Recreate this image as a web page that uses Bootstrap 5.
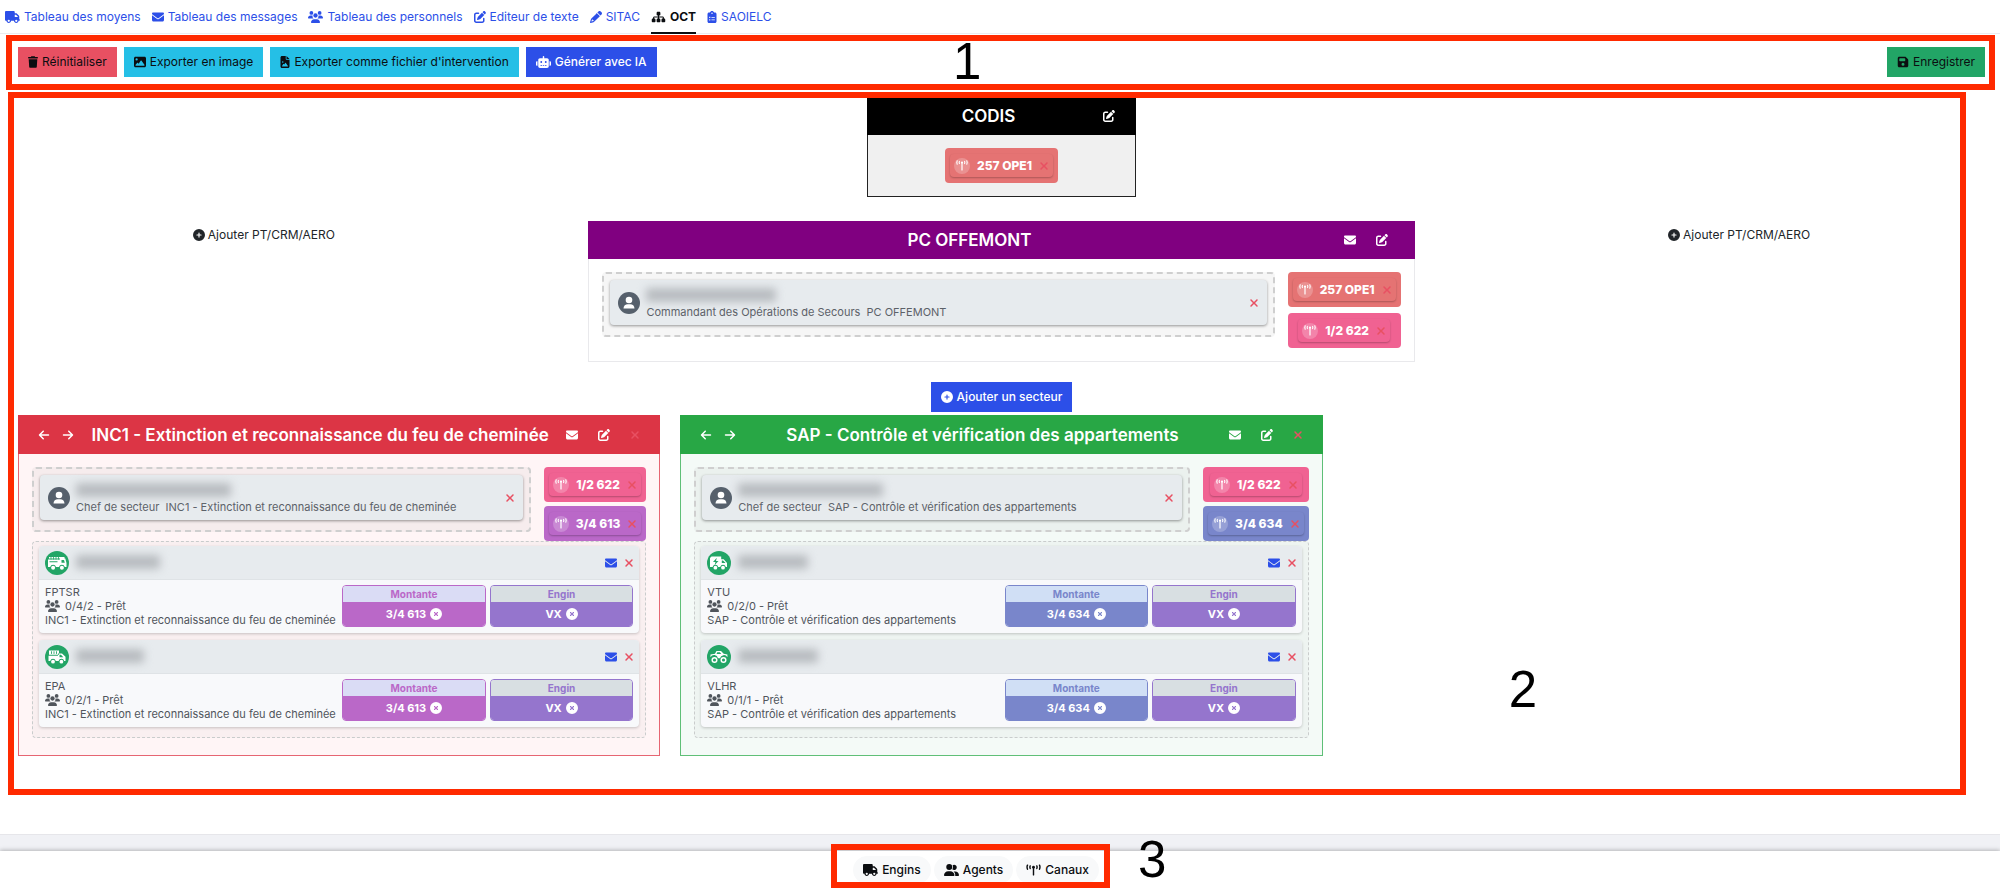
<!DOCTYPE html>
<html lang="fr">
<head>
<meta charset="utf-8">
<meta name="viewport" content="width=device-width, initial-scale=1">
<title>OCT</title>
<link rel="stylesheet" href="https://cdn.jsdelivr.net/npm/bootstrap@5.3.0/dist/css/bootstrap.min.css">
<style>
body { font-family: Inter, "Liberation Sans", sans-serif; font-size: 12px; line-height: 18px; color: #0b0d10; background: #fff; }
.ico { width: 12px; height: 12px; fill: currentColor; flex: none; }
.ico-wide { width: 15px; }
.ico-slim { width: 10px; }
.tabs-bar { height: 34px; padding-left: 5px; gap: 11px; border-bottom: 1px solid #ececf0; }
.tabs-bar a { display: flex; align-items: center; gap: 4px; height: 34px; color: #2c4fe8; text-decoration: none; padding-bottom: 1px; border-bottom: 2px solid transparent; padding-top: 2px; }
.tabs-bar a.active { color: #0b0d10; font-weight: 700; border-bottom-color: #0b0d10; }
.zone { border: 6px solid #ff2a00; }
.zone-num { position: absolute; font: 51px/52px "Liberation Sans", Arial, sans-serif; color: #000; }
.tool-zone { margin: 1px 5px 0 6px; padding: 6px 4px 7px 6px; gap: 7px; }
.num-one { left: 47.6%; top: -5px; }
.tool { --bs-btn-font-size: 12px; --bs-btn-line-height: 18px; --bs-btn-padding-y: 5px; --bs-btn-padding-x: 9px; --bs-btn-border-radius: 0; display: inline-flex; align-items: center; gap: 4px; }
.tool-red { --bs-btn-bg: #e85062; --bs-btn-border-color: #e85062; --bs-btn-color: #0b0d10; }
.tool-cyan { --bs-btn-bg: #25bfe6; --bs-btn-border-color: #25bfe6; --bs-btn-color: #0b0d10; }
.tool-blue { --bs-btn-bg: #2c4fe8; --bs-btn-border-color: #2c4fe8; --bs-btn-color: #fff; --bs-btn-font-weight: 500; }
.tool-green { --bs-btn-bg: #22a566; --bs-btn-border-color: #22a566; --bs-btn-color: #0b0d10; }
.board { padding: 7px 15px 0 18px; }
.board-zone { position: absolute; inset: 2px 34px 39px 8px; pointer-events: none; z-index: 2; }
.num-two { right: 423px; bottom: 73px; }
.glyph { border: 0; background: none; padding: 0; display: inline-flex; align-items: center; justify-content: center; color: inherit; }
.glyph-red { color: #e85062; }
.glyph-blue { color: #2c4fe8; }
.unit { border: 1px solid #e9e9ec; }
.unit-head { height: 38px; color: #fff; padding: 0 27px 0 14px; gap: 7px; margin: -1px -1px 0; }
.unit-title { font-size: 17px; line-height: 24px; font-weight: 600; margin: 0; flex: 1; text-align: center; white-space: nowrap; }
.head-tools { gap: 20px; flex: none; }
.codis { width: 269px; margin-bottom: 24px; background: #f0f0f0; border-color: #222; }
.codis .unit-head { background: #000; padding-right: 21px; }
.codis-body { padding: 13px 0; }
.command { width: 84%; }
.command .unit-head { background: #800080; }
.command-body { padding: 13px; gap: 13px; }
.add-link { font-size: 12px; line-height: 18px; color: #212529; gap: 3px; margin-top: 5px; }
.add-zone { margin: 20px 0 3px; }
.sectors { display: grid; grid-template-columns: repeat(3, minmax(0, 1fr)); gap: 20px; }
.sector-red { border-color: #e66572; background: #fff5f6; }
.sector-red .unit-head { background: #dc3545; }
.sector-green { border-color: #5fbf77; background: #f4faf7; }
.sector-green .unit-head { background: #28a745; }
.sectors .unit-head { height: 39px; padding: 0 20px; }
.moves { gap: 12px; }
.sector-body { padding: 13px 13px 17px; }
.lead-row { gap: 13px; }
.chips { display: flex; flex-direction: column; gap: 4px; flex: none; }
.command .chips { gap: 6px; }
.chip { border-radius: 4px; padding: 6px 5px; display: flex; justify-content: center; color: #fff; font-weight: 800; font-size: 12px; }
.chip-in { display: flex; align-items: center; height: 23px; padding: 0 4px; border-radius: 4px; box-shadow: 0 1px 2px rgba(0,0,0,.25); white-space: nowrap; }
.chip-in .aerial { width: 16px; height: 16px; margin-right: 7px; }
.chip-in .glyph { margin-left: 7px; }
.c-coral { background: #e57373; } .c-pink { background: #f06292; } .c-orchid { background: #ba68c8; } .c-indigo { background: #7986cb; }
.slot { flex: 1; min-width: 0; height: 65px; border: 2px dashed #cfcfcf; border-radius: 4px; background: rgba(0,0,0,.035); padding: 6px; }
.person { height: 45px; background: #e7ebee; border-radius: 4px; box-shadow: 0 1px 3px rgba(0,0,0,.4); padding: 0 7px 0 8px; gap: 6px; color: #5c6168; font-size: 11px; line-height: 14px; white-space: nowrap; }
.person .face { width: 22px; height: 22px; flex: none; }
.masked { display: block; height: 14px; margin: 2px 0 3px; border-radius: 3px; filter: blur(4px); background: #b8bcc0; }
.fleet { border: 1px dashed #c9cccc; border-radius: 4px; background: rgba(0,0,0,.025); padding: 4px 6px 10px; display: flex; flex-direction: column; gap: 7px; }
.engine { border-radius: 4px; background: #f8f9fb; box-shadow: 0 1px 3px rgba(0,0,0,.2); color: #50555c; font-size: 11px; line-height: 14px; overflow: hidden; }
.engine-head { height: 34px; background: #e7ebee; border-bottom: 1px solid #dfe3e6; padding: 0 5px 0 6px; gap: 7px; }
.engine-head .disc { width: 24px; height: 24px; flex: none; }
.engine-body { padding: 5px 6px 6px; gap: 4px; }
.engine-body p { margin: 0; white-space: nowrap; display: flex; align-items: center; gap: 5px; }
.line { width: 24.4%; flex: none; border-radius: 4px; overflow: hidden; border: 1px solid var(--tone); color: var(--tone); text-align: center; font-weight: 700; }
.line-kind { height: 16px; line-height: 16px; font-size: 10px; }
.line-name { height: 24px; line-height: 24px; background: var(--tone); color: #fff; gap: 4px; }
.t-orchid { --tone: #ba68c8; } .t-orchid .line-kind { background: #dadcf5; }
.t-indigo { --tone: #7986cb; } .t-indigo .line-kind { background: #d0dff5; }
.t-violet { --tone: #9575cd; } .t-violet .line-kind { background: #d8dfe2; }
.dock-gap { height: 17px; background: #f0f1f5; border-top: 1px solid #e6e6ea; }
.dock { height: 37px; padding: 5px 48px 0 0; gap: 3px; background: #fff; box-shadow: 0 -1px 4px rgba(0,0,0,.25); position: relative; }
.pill { --bs-btn-font-size: 12px; --bs-btn-line-height: 18px; --bs-btn-padding-y: 4px; --bs-btn-padding-x: 9px; --bs-btn-font-weight: 500; --bs-btn-color: #0b0d10; --bs-btn-bg: #f8f9fa; --bs-btn-border-color: #f8f9fa; display: inline-flex; align-items: center; gap: 4px; }
.dock-zone { position: absolute; top: -7px; bottom: 0; left: calc(50% - 169px); width: 279px; pointer-events: none; }
.num-three { left: calc(50% + 138px); top: -17px; }
</style>
</head>
<body class="d-flex flex-column min-vh-100">
<svg class="d-none" xmlns="http://www.w3.org/2000/svg">
<symbol id="truck" viewBox="0 0 640 512"><path fill-rule="evenodd" d="M48 0C21.500 0 0 21.500 0 48V368c0 26.500 21.500 48 48 48H64c0 53 43 96 96 96s96-43 96-96H384c0 53 43 96 96 96s96-43 96-96h32c17.700 0 32-14.300 32-32s-14.300-32-32-32V237.300c0-17-6.700-33.300-18.700-45.300L512 114.700c-12-12-28.300-18.700-45.300-18.700H416V48c0-26.500-21.500-48-48-48H48zM416 160h50.700L544 237.300V256H416V160zM112 416a48 48 0 1 1 96 0 48 48 0 1 1-96 0zm368-48a48 48 0 1 1 0 96 48 48 0 1 1 0-96z"/></symbol>
<symbol id="mail" viewBox="0 0 512 512"><path d="M48 64C21.500 64 0 85.500 0 112c0 15.100 7.100 29.300 19.200 38.400L236.800 313.600c11.400 8.500 27 8.500 38.400 0L492.800 150.400c12.100-9.100 19.200-23.300 19.200-38.400c0-26.500-21.500-48-48-48H48zM0 176V384c0 35.300 28.700 64 64 64H448c35.300 0 64-28.700 64-64V176L294.400 339.200c-22.800 17.100-54 17.100-76.800 0L0 176z"/></symbol>
<symbol id="edit" viewBox="0 0 512 512"><path d="M471.600 21.700c-21.900-21.900-57.300-21.900-79.200 0L362.300 51.700l97.900 97.900 30.100-30.100c21.900-21.900 21.900-57.300 0-79.200L471.600 21.700zm-299.200 220c-6.100 6.100-10.800 13.600-13.500 21.900l-29.600 88.800c-2.900 8.600-.6 18.100 5.800 24.600s15.900 8.700 24.600 5.800l88.800-29.600c8.200-2.700 15.700-7.400 21.900-13.500L437.700 172.300 339.700 74.300 172.400 241.700zM96 64C43 64 0 107 0 160V416c0 53 43 96 96 96H352c53 0 96-43 96-96V320c0-17.700-14.300-32-32-32s-32 14.300-32 32v96c0 17.700-14.300 32-32 32H96c-17.700 0-32-14.300-32-32V160c0-17.700 14.300-32 32-32h96c17.700 0 32-14.300 32-32s-14.300-32-32-32H96z"/></symbol>
<symbol id="pencil" viewBox="0 0 512 512"><path fill-rule="evenodd" d="M410.300 231l11.300-11.300-33.900-33.900-62.100-62.100L291.700 89.800l-11.300 11.300-22.600 22.600L58.600 322.900c-10.400 10.400-18 23.300-22.200 37.400L1 480.700c-2.500 8.400-.2 17.500 6.100 23.700s15.300 8.500 23.700 6.100l120.300-35.400c14.100-4.200 27-11.800 37.400-22.200L387.700 253.700 410.300 231zM160 399.400l-9.100 22.700c-4 3.100-8.500 5.400-13.300 6.900L59.400 452l23-78.100c1.400-4.900 3.800-9.400 6.900-13.300l22.700-9.100v32c0 8.800 7.200 16 16 16h32zM362.700 18.700L314.300 67.100l130 130 48.400-48.400c25-25 25-65.500 0-90.500L453.300 18.700c-25-25-65.500-25-90.500 0z"/></symbol>
<symbol id="tree" viewBox="0 0 576 512"><path d="M208 80c0-26.500 21.500-48 48-48h64c26.500 0 48 21.500 48 48v64c0 26.500-21.500 48-48 48h-8v40H464c30.900 0 56 25.100 56 56v32h8c26.500 0 48 21.500 48 48v64c0 26.500-21.500 48-48 48H464c-26.500 0-48-21.500-48-48V368c0-26.500 21.500-48 48-48h8V288c0-4.400-3.600-8-8-8H312v40h8c26.500 0 48 21.500 48 48v64c0 26.500-21.500 48-48 48H256c-26.500 0-48-21.500-48-48V368c0-26.500 21.500-48 48-48h8V280H112c-4.400 0-8 3.600-8 8v32h8c26.500 0 48 21.500 48 48v64c0 26.500-21.500 48-48 48H48c-26.500 0-48-21.500-48-48V368c0-26.500 21.500-48 48-48h8V288c0-30.900 25.100-56 56-56H264V192h-8c-26.500 0-48-21.500-48-48V80z"/></symbol>
<symbol id="clip" viewBox="0 0 384 512"><path fill-rule="evenodd" d="M192 0c-42 0-77 27-90 64H64C29 64 0 93 0 128V448c0 35 29 64 64 64H320c35 0 64-29 64-64V128c0-35-29-64-64-64H282C269 27 234 0 192 0zm0 64a32 32 0 1 1 0 64 32 32 0 1 1 0-64zM72 248h48v48H72zm96 8h144v32H168zM72 352h48v48H72zm96 8h144v32H168z"/></symbol>
<symbol id="crew" viewBox="0 0 640 512"><circle cx="144" cy="80" r="80"/><circle cx="496" cy="80" r="80"/><circle cx="320" cy="192" r="92"/><path d="M0 299C0 240 48 192 107 192h42c18 0 34 4 49 10-14 56 8 90 42 118H21c-12 0-21-9-21-21zM640 299c0-59-48-107-107-107h-42c-18 0-34 4-49 10 14 56-8 90-42 118H619c12 0 21-9 21-21zM128 485c0-74 60-133 133-133H379c74 0 133 60 133 133 0 15-12 27-27 27H155c-15 0-27-12-27-27z"/></symbol>
<symbol id="duo" viewBox="0 0 640 512"><path d="M96 128a128 128 0 1 1 256 0A128 128 0 1 1 96 128zM0 482.300C0 383.800 79.800 304 178.300 304h91.400C368.200 304 448 383.800 448 482.300c0 16.400-13.300 29.700-29.700 29.700H29.700C13.300 512 0 498.700 0 482.300zM609.300 512H471.400c5.400-9.400 8.600-20.300 8.600-32v-8c0-60.700-27.100-115.200-69.800-151.800c2.400-.1 4.700-.2 7.100-.2h61.400C567.800 320 640 392.200 640 481.300c0 17-13.800 30.700-30.700 30.700zM432 256c-31 0-59-12.600-79.300-32.900C372.400 196.500 384 163.600 384 128c0-26.800-6.600-52.100-18.300-74.300C384.300 40.100 407.200 32 432 32c61.900 0 112 50.100 112 112s-50.100 112-112 112z"/></symbol>
<symbol id="trash" viewBox="0 0 448 512"><path d="M135.200 17.700L128 32H32C14.300 32 0 46.300 0 64S14.300 96 32 96H416c17.700 0 32-14.300 32-32s-14.300-32-32-32H320l-7.200-14.300C307.400 6.800 296.300 0 284.200 0H163.800c-12.100 0-23.200 6.800-28.600 17.700zM416 128H32L53.200 467c1.600 25.300 22.600 45 47.900 45H346.900c25.300 0 46.300-19.700 47.900-45L416 128z"/></symbol>
<symbol id="image" viewBox="0 0 512 512"><path fill-rule="evenodd" d="M0 96C0 60.700 28.700 32 64 32H448c35.300 0 64 28.700 64 64V416c0 35.300-28.700 64-64 64H64c-35.300 0-64-28.700-64-64V96zM323.800 202.500c-4.500-6.600-11.900-10.500-19.800-10.500s-15.400 3.900-19.800 10.500l-87 127.600L170.700 297c-4.600-5.700-11.500-9-18.700-9s-14.200 3.300-18.700 9l-64 80c-5.800 7.200-6.900 17.100-2.900 25.400s12.400 13.600 21.600 13.600H424c8.900 0 17.100-4.900 21.200-12.800s3.600-17.400-1.400-24.700l-120-176zM112 192a48 48 0 1 0 0-96 48 48 0 1 0 0 96z"/></symbol>
<symbol id="fileimg" viewBox="0 0 384 512"><path fill-rule="evenodd" d="M64 0C28.700 0 0 28.700 0 64V448c0 35.300 28.700 64 64 64H320c35.300 0 64-28.700 64-64V160H256c-17.700 0-32-14.300-32-32V0H64zM256 0V128H384L256 0zM64 256a32 32 0 1 1 64 0 32 32 0 1 1-64 0zm152 32c5.300 0 10.200 2.600 13.200 6.900l88 128c3.400 4.900 3.700 11.300 1 16.500s-8.200 8.600-14.200 8.600H80c-5.800 0-11.100-3.100-13.900-8.100s-2.800-11.200.2-16.100l48-80c2.900-4.800 8.100-7.800 13.700-7.800s10.800 2.900 13.700 7.800l12.800 21.400 48.300-70.200c3-4.300 7.900-6.900 13.200-6.900z"/></symbol>
<symbol id="robot" viewBox="0 0 640 512"><path fill-rule="evenodd" d="M320 0c17.700 0 32 14.300 32 32V96H472c39.800 0 72 32.200 72 72V440c0 39.800-32.200 72-72 72H168c-39.800 0-72-32.200-72-72V168c0-39.800 32.200-72 72-72H288V32c0-17.700 14.300-32 32-32zM192 384v32h64v-32zm96 0v32h64v-32zm96 0v32h64v-32zM264 256a40 40 0 1 0-80 0 40 40 0 1 0 80 0zm152 40a40 40 0 1 0 0-80 40 40 0 1 0 0 80zM48 224H64V416H48c-26.500 0-48-21.500-48-48V272c0-26.500 21.500-48 48-48zm544 0c26.500 0 48 21.500 48 48v96c0 26.500-21.500 48-48 48H576V224h16z"/></symbol>
<symbol id="save" viewBox="0 0 448 512"><path fill-rule="evenodd" d="M64 32C28.700 32 0 60.700 0 96V416c0 35.300 28.700 64 64 64H384c35.300 0 64-28.700 64-64V173.300c0-17-6.700-33.300-18.700-45.300L352 50.700C340 38.700 323.700 32 306.700 32H64zm0 96c0-17.700 14.300-32 32-32H288c17.700 0 32 14.300 32 32v64c0 17.700-14.300 32-32 32H96c-17.700 0-32-14.300-32-32V128zM224 288a64 64 0 1 1 0 128 64 64 0 1 1 0-128z"/></symbol>
<symbol id="plus" viewBox="0 0 512 512"><path fill-rule="evenodd" d="M256 512A256 256 0 1 0 256 0a256 256 0 1 0 0 512zM232 344V280H168c-13.300 0-24-10.700-24-24s10.700-24 24-24h64V168c0-13.300 10.700-24 24-24s24 10.700 24 24v64h64c13.300 0 24 10.700 24 24s-10.700 24-24 24H280v64c0 13.300-10.700 24-24 24s-24-10.700-24-24z"/></symbol>
<symbol id="cross" viewBox="0 0 384 512"><path d="M342.600 150.600c12.500-12.500 12.500-32.800 0-45.300s-32.800-12.500-45.300 0L192 210.700 86.600 105.400c-12.500-12.500-32.800-12.500-45.300 0s-12.500 32.800 0 45.300L146.700 256 41.400 361.400c-12.500 12.500-12.500 32.800 0 45.300s32.800 12.500 45.300 0L192 301.300 297.400 406.600c12.500 12.500 32.800 12.500 45.300 0s12.500-32.800 0-45.300L237.300 256 342.600 150.600z"/></symbol>
<symbol id="drop" viewBox="0 0 512 512"><path fill-rule="evenodd" d="M256 512A256 256 0 1 0 256 0a256 256 0 1 0 0 512zM175 175c9.400-9.400 24.600-9.400 33.900 0l47 47 47-47c9.400-9.400 24.600-9.400 33.900 0s9.400 24.600 0 33.900l-47 47 47 47c9.400 9.400 9.400 24.600 0 33.900s-24.600 9.400-33.900 0l-47-47-47 47c-9.400 9.400-24.600 9.400-33.900 0s-9.400-24.600 0-33.900l47-47-47-47c-9.400-9.400-9.400-24.600 0-33.900z"/></symbol>
<symbol id="left" viewBox="0 0 448 512"><path d="M9.400 233.400c-12.500 12.500-12.500 32.800 0 45.300l160 160c12.500 12.500 32.800 12.500 45.300 0s12.500-32.800 0-45.300L109.200 288H416c17.700 0 32-14.300 32-32s-14.300-32-32-32H109.300L214.600 118.600c12.500-12.500 12.500-32.800 0-45.300s-32.800-12.500-45.300 0l-160 160z"/></symbol>
<symbol id="right" viewBox="0 0 448 512"><path d="M438.600 233.400c12.500 12.500 12.500 32.800 0 45.300l-160 160c-12.500 12.500-32.800 12.500-45.300 0s-12.500-32.800 0-45.300L338.800 288H32c-17.700 0-32-14.300-32-32s14.300-32 32-32H338.700L233.400 118.600c-12.500-12.500-12.500-32.800 0-45.300s32.800-12.500 45.300 0l160 160z"/></symbol>
<symbol id="tower" viewBox="0 0 20 16"><g fill="none" stroke="currentColor" stroke-linecap="round"><path stroke-width="1.900" d="M10 5v9.500"/><path stroke-width="1.900" d="M2 1.500q-1.200 2.500 0 5.500M5.600 2.500q-.8 1.500 0 3.500M18 1.500q1.200 2.500 0 5.500M14.400 2.500q.8 1.500 0 3.500"/></g><circle cx="10" cy="4.300" r="1.900"/></symbol>
<symbol id="aerial" viewBox="0 0 16 16"><circle cx="8" cy="8" r="8" fill="#fff" fill-opacity=".22"/><g fill="none" stroke="#fff" stroke-linecap="round"><path stroke-width="1.200" d="M8 5v7"/><path stroke-width="1.100" d="M3.200 2.800q-.8 1.600 0 3.400M5.400 3.400q-.5 1 0 2.200M12.800 2.800q.8 1.600 0 3.400M10.600 3.400q.5 1 0 2.200"/></g><circle cx="8" cy="4.600" r="1.100" fill="#fff"/></symbol>
<symbol id="face" viewBox="0 0 22 22"><circle cx="11" cy="11" r="11" fill="#56606c"/><circle cx="11" cy="8" r="3.300" fill="#fff"/><path fill="#fff" d="M5.500 16.500c0-2.800 2-4.300 4.200-4.300h2.600c2.200 0 4.200 1.500 4.200 4.300z"/></symbol>
<symbol id="v-pump" viewBox="0 0 24 24"><circle cx="12" cy="12" r="12" fill="#22a566"/><path fill="#fff" fill-rule="evenodd" d="M4 6h15.500v1.400H4zM3 8.600h12V7.500h5.300l1.200 4.500v4h-1.700a3 3 0 0 0-5.800 0H11a3 3 0 0 0-5.800 0H3zM16.500 9v2.800h3.300L19 9zM4.500 10.300v1h8v-1z"/><circle cx="8.100" cy="16.700" r="2" fill="#fff"/><circle cx="16.900" cy="16.700" r="2" fill="#fff"/><path stroke="#22a566" stroke-width=".8" d="M6 6v2.500M8.500 6v2.500M11 6v2.500M13.500 6v2.500"/></symbol>
<symbol id="v-ladder" viewBox="0 0 24 24"><circle cx="12" cy="12" r="12" fill="#22a566"/><path fill="#fff" fill-rule="evenodd" d="M4 5.500h10v4.200H4zM3.500 10.700h9.500V8.500h4l3.500 3.300V16h-1.300a2.900 2.900 0 0 0-5.600 0h-2.800a2.900 2.900 0 0 0-5.600 0H3.500zM14.500 9.700v2.600h3.800l-2.300-2.600z"/><circle cx="8" cy="16.700" r="1.900" fill="#fff"/><circle cx="16.400" cy="16.700" r="1.900" fill="#fff"/><path stroke="#22a566" stroke-width=".9" d="M6.500 6.300v2.600M9 6.300v2.600M11.500 6.300v2.600"/></symbol>
<symbol id="v-van" viewBox="0 0 24 24"><circle cx="12" cy="12" r="12" fill="#22a566"/><path fill="#fff" fill-rule="evenodd" d="M4.500 5.500h9.700v2.700h2.500l3.300 3.800v4h-1.200a2.900 2.900 0 0 0-5.600 0h-2a2.900 2.900 0 0 0-5.600 0H3V7zM9.800 6.700L6 11h2.500l-1 3.200 4-4.300H9zM14.800 9.400v2.700h3.800L16 9.400z"/><circle cx="8.400" cy="16.700" r="1.900" fill="#fff"/><circle cx="16" cy="16.700" r="1.900" fill="#fff"/></symbol>
<symbol id="v-off" viewBox="0 0 24 24"><circle cx="12" cy="12" r="12" fill="#22a566"/><path fill="#fff" fill-rule="evenodd" d="M3.500 12.200V9.600L8 8.800l1.500-2.900H14l2.700 2.900 3.700.8v2.600a4 4 0 0 0-7.400 1h-2a4 4 0 0 0-7.500-1zM10.300 7.200L9.500 9h4.800l-1.500-1.800z"/><g fill="none" stroke="#fff" stroke-width="1.500"><circle cx="7.500" cy="15" r="2.300"/><circle cx="16.500" cy="15" r="2.300"/></g></symbol>
</svg>

<nav class="tabs-bar d-flex">
  <a href="#"><svg class="ico ico-wide"><use href="#truck"/></svg>Tableau des moyens</a>
  <a href="#"><svg class="ico"><use href="#mail"/></svg>Tableau des messages</a>
  <a href="#"><svg class="ico ico-wide"><use href="#crew"/></svg>Tableau des personnels</a>
  <a href="#"><svg class="ico"><use href="#edit"/></svg>Editeur de texte</a>
  <a href="#"><svg class="ico"><use href="#pencil"/></svg>SITAC</a>
  <a href="#" class="active" aria-current="page"><svg class="ico ico-wide"><use href="#tree"/></svg>OCT</a>
  <a href="#"><svg class="ico ico-slim"><use href="#clip"/></svg>SAOIELC</a>
</nav>

<section class="tool-zone zone d-flex position-relative">
  <button type="button" class="btn tool tool-red"><svg class="ico ico-slim"><use href="#trash"/></svg>Réinitialiser</button>
  <button type="button" class="btn tool tool-cyan"><svg class="ico"><use href="#image"/></svg>Exporter en image</button>
  <button type="button" class="btn tool tool-cyan"><svg class="ico ico-slim"><use href="#fileimg"/></svg>Exporter comme fichier d'intervention</button>
  <button type="button" class="btn tool tool-blue"><svg class="ico ico-wide"><use href="#robot"/></svg>Générer avec IA</button>
  <span class="zone-num num-one">1</span>
  <button type="button" class="btn tool tool-green ms-auto"><svg class="ico"><use href="#save"/></svg>Enregistrer</button>
</section>

<main class="board position-relative flex-grow-1">
  <section class="unit codis mx-auto">
    <header class="unit-head d-flex align-items-center"><h2 class="unit-title">CODIS</h2>
      <div class="head-tools d-flex"><button type="button" class="glyph" aria-label="Modifier"><svg class="ico"><use href="#edit"/></svg></button></div></header>
    <div class="codis-body d-flex justify-content-center">
      <div class="chip c-coral"><div class="chip-in"><svg class="aerial"><use href="#aerial"/></svg>257 OPE1<button type="button" class="glyph glyph-red" aria-label="Retirer"><svg class="ico ico-slim"><use href="#cross"/></svg></button></div></div>
    </div>
  </section>

  <div class="row g-0">
    <div class="col-3 d-flex justify-content-center align-items-start"><button type="button" class="glyph add-link"><svg class="ico"><use href="#plus"/></svg>Ajouter PT/CRM/AERO</button></div>
    <div class="col-6">
      <section class="unit command mx-auto">
        <header class="unit-head d-flex align-items-center"><h2 class="unit-title">PC OFFEMONT</h2>
          <div class="head-tools d-flex"><button type="button" class="glyph" aria-label="Message"><svg class="ico"><use href="#mail"/></svg></button><button type="button" class="glyph" aria-label="Modifier"><svg class="ico"><use href="#edit"/></svg></button></div></header>
        <div class="command-body d-flex">
          <div class="slot"><div class="person d-flex align-items-center"><svg class="face"><use href="#face"/></svg><div class="flex-grow-1"><span class="masked" style="width:130px"></span>Commandant des Opérations de Secours&nbsp; PC OFFEMONT</div><button type="button" class="glyph glyph-red" aria-label="Retirer"><svg class="ico"><use href="#cross"/></svg></button></div></div>
          <div class="chips">
            <div class="chip c-coral"><div class="chip-in"><svg class="aerial"><use href="#aerial"/></svg>257 OPE1<button type="button" class="glyph glyph-red" aria-label="Retirer"><svg class="ico ico-slim"><use href="#cross"/></svg></button></div></div>
            <div class="chip c-pink"><div class="chip-in"><svg class="aerial"><use href="#aerial"/></svg>1/2 622<button type="button" class="glyph glyph-red" aria-label="Retirer"><svg class="ico ico-slim"><use href="#cross"/></svg></button></div></div>
          </div>
        </div>
      </section>
    </div>
    <div class="col-3 d-flex justify-content-center align-items-start"><button type="button" class="glyph add-link"><svg class="ico"><use href="#plus"/></svg>Ajouter PT/CRM/AERO</button></div>
  </div>

  <div class="add-zone d-flex justify-content-center"><button type="button" class="btn tool tool-blue"><svg class="ico"><use href="#plus"/></svg>Ajouter un secteur</button></div>

  <div class="sectors">
    <section class="unit sector-red">
      <header class="unit-head d-flex align-items-center">
        <div class="moves d-flex"><button type="button" class="glyph" aria-label="Vers la gauche"><svg class="ico"><use href="#left"/></svg></button><button type="button" class="glyph" aria-label="Vers la droite"><svg class="ico"><use href="#right"/></svg></button></div>
        <h2 class="unit-title">INC1 - Extinction et reconnaissance du feu de cheminée</h2>
        <div class="head-tools d-flex"><button type="button" class="glyph" aria-label="Message"><svg class="ico"><use href="#mail"/></svg></button><button type="button" class="glyph" aria-label="Modifier"><svg class="ico"><use href="#edit"/></svg></button><button type="button" class="glyph glyph-red" aria-label="Supprimer"><svg class="ico ico-slim"><use href="#cross"/></svg></button></div>
      </header>
      <div class="sector-body">
        <div class="d-flex lead-row">
          <div class="slot"><div class="person d-flex align-items-center"><svg class="face"><use href="#face"/></svg><div class="flex-grow-1"><span class="masked" style="width:155px"></span>Chef de secteur&nbsp; INC1 - Extinction et reconnaissance du feu de cheminée</div><button type="button" class="glyph glyph-red" aria-label="Retirer"><svg class="ico"><use href="#cross"/></svg></button></div></div>
          <div class="chips">
            <div class="chip c-pink"><div class="chip-in"><svg class="aerial"><use href="#aerial"/></svg>1/2 622<button type="button" class="glyph glyph-red" aria-label="Retirer"><svg class="ico ico-slim"><use href="#cross"/></svg></button></div></div>
            <div class="chip c-orchid"><div class="chip-in"><svg class="aerial"><use href="#aerial"/></svg>3/4 613<button type="button" class="glyph glyph-red" aria-label="Retirer"><svg class="ico ico-slim"><use href="#cross"/></svg></button></div></div>
          </div>
        </div>
        <div class="fleet">
          <article class="engine">
            <div class="engine-head d-flex align-items-center"><svg class="disc"><use href="#v-pump"/></svg><span class="masked" style="width:84px"></span><button type="button" class="glyph glyph-blue ms-auto" aria-label="Message"><svg class="ico"><use href="#mail"/></svg></button><button type="button" class="glyph glyph-red" aria-label="Retirer"><svg class="ico ico-slim"><use href="#cross"/></svg></button></div>
            <div class="engine-body d-flex">
              <div class="flex-grow-1"><p>FPTSR</p><p><svg class="ico ico-wide"><use href="#crew"/></svg>0/4/2 - Prêt</p><p>INC1 - Extinction et reconnaissance du feu de cheminée</p></div>
              <div class="line t-orchid"><div class="line-kind">Montante</div><div class="line-name d-flex align-items-center justify-content-center">3/4 613<button type="button" class="glyph" aria-label="Libérer"><svg class="ico"><use href="#drop"/></svg></button></div></div>
              <div class="line t-violet"><div class="line-kind">Engin</div><div class="line-name d-flex align-items-center justify-content-center">VX<button type="button" class="glyph" aria-label="Libérer"><svg class="ico"><use href="#drop"/></svg></button></div></div>
            </div>
          </article>
          <article class="engine">
            <div class="engine-head d-flex align-items-center"><svg class="disc"><use href="#v-ladder"/></svg><span class="masked" style="width:68px"></span><button type="button" class="glyph glyph-blue ms-auto" aria-label="Message"><svg class="ico"><use href="#mail"/></svg></button><button type="button" class="glyph glyph-red" aria-label="Retirer"><svg class="ico ico-slim"><use href="#cross"/></svg></button></div>
            <div class="engine-body d-flex">
              <div class="flex-grow-1"><p>EPA</p><p><svg class="ico ico-wide"><use href="#crew"/></svg>0/2/1 - Prêt</p><p>INC1 - Extinction et reconnaissance du feu de cheminée</p></div>
              <div class="line t-orchid"><div class="line-kind">Montante</div><div class="line-name d-flex align-items-center justify-content-center">3/4 613<button type="button" class="glyph" aria-label="Libérer"><svg class="ico"><use href="#drop"/></svg></button></div></div>
              <div class="line t-violet"><div class="line-kind">Engin</div><div class="line-name d-flex align-items-center justify-content-center">VX<button type="button" class="glyph" aria-label="Libérer"><svg class="ico"><use href="#drop"/></svg></button></div></div>
            </div>
          </article>
        </div>
      </div>
    </section>

    <section class="unit sector-green">
      <header class="unit-head d-flex align-items-center">
        <div class="moves d-flex"><button type="button" class="glyph" aria-label="Vers la gauche"><svg class="ico"><use href="#left"/></svg></button><button type="button" class="glyph" aria-label="Vers la droite"><svg class="ico"><use href="#right"/></svg></button></div>
        <h2 class="unit-title">SAP - Contrôle et vérification des appartements</h2>
        <div class="head-tools d-flex"><button type="button" class="glyph" aria-label="Message"><svg class="ico"><use href="#mail"/></svg></button><button type="button" class="glyph" aria-label="Modifier"><svg class="ico"><use href="#edit"/></svg></button><button type="button" class="glyph glyph-red" aria-label="Supprimer"><svg class="ico ico-slim"><use href="#cross"/></svg></button></div>
      </header>
      <div class="sector-body">
        <div class="d-flex lead-row">
          <div class="slot"><div class="person d-flex align-items-center"><svg class="face"><use href="#face"/></svg><div class="flex-grow-1"><span class="masked" style="width:145px"></span>Chef de secteur&nbsp; SAP - Contrôle et vérification des appartements</div><button type="button" class="glyph glyph-red" aria-label="Retirer"><svg class="ico"><use href="#cross"/></svg></button></div></div>
          <div class="chips">
            <div class="chip c-pink"><div class="chip-in"><svg class="aerial"><use href="#aerial"/></svg>1/2 622<button type="button" class="glyph glyph-red" aria-label="Retirer"><svg class="ico ico-slim"><use href="#cross"/></svg></button></div></div>
            <div class="chip c-indigo"><div class="chip-in"><svg class="aerial"><use href="#aerial"/></svg>3/4 634<button type="button" class="glyph glyph-red" aria-label="Retirer"><svg class="ico ico-slim"><use href="#cross"/></svg></button></div></div>
          </div>
        </div>
        <div class="fleet">
          <article class="engine">
            <div class="engine-head d-flex align-items-center"><svg class="disc"><use href="#v-van"/></svg><span class="masked" style="width:70px"></span><button type="button" class="glyph glyph-blue ms-auto" aria-label="Message"><svg class="ico"><use href="#mail"/></svg></button><button type="button" class="glyph glyph-red" aria-label="Retirer"><svg class="ico ico-slim"><use href="#cross"/></svg></button></div>
            <div class="engine-body d-flex">
              <div class="flex-grow-1"><p>VTU</p><p><svg class="ico ico-wide"><use href="#crew"/></svg>0/2/0 - Prêt</p><p>SAP - Contrôle et vérification des appartements</p></div>
              <div class="line t-indigo"><div class="line-kind">Montante</div><div class="line-name d-flex align-items-center justify-content-center">3/4 634<button type="button" class="glyph" aria-label="Libérer"><svg class="ico"><use href="#drop"/></svg></button></div></div>
              <div class="line t-violet"><div class="line-kind">Engin</div><div class="line-name d-flex align-items-center justify-content-center">VX<button type="button" class="glyph" aria-label="Libérer"><svg class="ico"><use href="#drop"/></svg></button></div></div>
            </div>
          </article>
          <article class="engine">
            <div class="engine-head d-flex align-items-center"><svg class="disc"><use href="#v-off"/></svg><span class="masked" style="width:80px"></span><button type="button" class="glyph glyph-blue ms-auto" aria-label="Message"><svg class="ico"><use href="#mail"/></svg></button><button type="button" class="glyph glyph-red" aria-label="Retirer"><svg class="ico ico-slim"><use href="#cross"/></svg></button></div>
            <div class="engine-body d-flex">
              <div class="flex-grow-1"><p>VLHR</p><p><svg class="ico ico-wide"><use href="#crew"/></svg>0/1/1 - Prêt</p><p>SAP - Contrôle et vérification des appartements</p></div>
              <div class="line t-indigo"><div class="line-kind">Montante</div><div class="line-name d-flex align-items-center justify-content-center">3/4 634<button type="button" class="glyph" aria-label="Libérer"><svg class="ico"><use href="#drop"/></svg></button></div></div>
              <div class="line t-violet"><div class="line-kind">Engin</div><div class="line-name d-flex align-items-center justify-content-center">VX<button type="button" class="glyph" aria-label="Libérer"><svg class="ico"><use href="#drop"/></svg></button></div></div>
            </div>
          </article>
        </div>
      </div>
    </section>
  </div>
  <div class="board-zone zone"><span class="zone-num num-two">2</span></div>
</main>

<div class="dock-gap"></div>
<footer class="dock d-flex justify-content-center align-items-start">
  <button type="button" class="btn pill rounded-pill"><svg class="ico ico-wide"><use href="#truck"/></svg>Engins</button>
  <button type="button" class="btn pill rounded-pill"><svg class="ico ico-wide"><use href="#duo"/></svg>Agents</button>
  <button type="button" class="btn pill rounded-pill"><svg class="ico ico-wide"><use href="#tower"/></svg>Canaux</button>
  <div class="dock-zone zone"></div>
  <span class="zone-num num-three">3</span>
</footer>
<script src="https://cdn.jsdelivr.net/npm/bootstrap@5.3.0/dist/js/bootstrap.bundle.min.js"></script>
</body>
</html>
